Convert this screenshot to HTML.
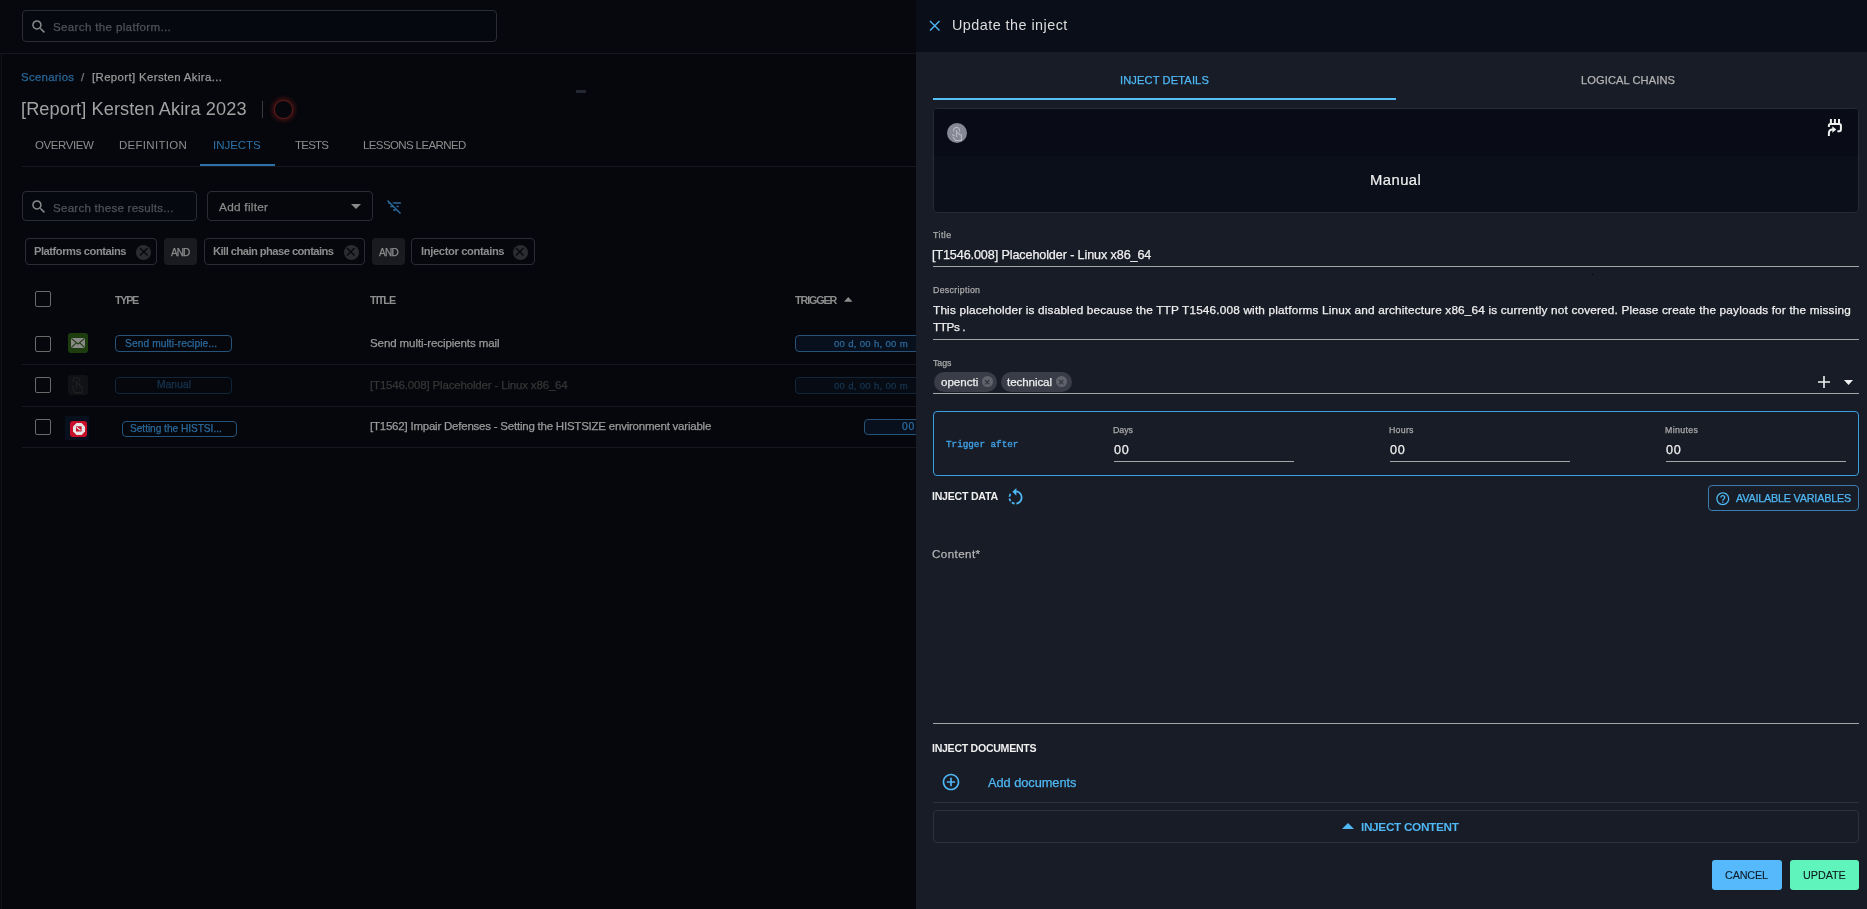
<!DOCTYPE html>
<html><head><meta charset="utf-8">
<style>
*{box-sizing:border-box;margin:0;padding:0}
html,body{width:1867px;height:909px;overflow:hidden;background:#05070c;font-family:"Liberation Sans",sans-serif}
.a{position:absolute}
.t{position:absolute;white-space:nowrap;line-height:1;will-change:transform}
svg{position:absolute;overflow:visible}
</style></head><body>
<div class="a" style="left:0px;top:0px;width:916px;height:53px;background:#06080d"></div>
<div class="a" style="left:0px;top:53px;width:916px;height:1px;background:#14171d"></div>
<div class="a" style="left:1px;top:54px;width:1px;height:855px;background:#101318"></div>
<div class="a" style="left:22px;top:10px;width:475px;height:32px;border:1px solid #2a2d33;border-radius:4px;background:#05080f"></div>
<svg style="left:29.5px;top:17.5px" width="17.5" height="17.5" viewBox="0 0 24 24"><path fill="#8a8a8a" d="M15.5 14h-.79l-.28-.27A6.471 6.471 0 0 0 16 9.5 6.5 6.5 0 1 0 9.5 16c1.61 0 3.09-.59 4.23-1.57l.27.28v.79l5 4.99L20.49 19l-4.99-5zm-6 0C7.01 14 5 11.99 5 9.5S7.01 5 9.5 5 14 7.01 14 9.5 11.99 14 9.5 14z"/></svg>
<div class="t" style="left:53.28px;top:21.28px;font-size:11.6px;color:#505258;font-family:'Liberation Sans',sans-serif;font-weight:normal;letter-spacing:0.330px;-webkit-text-stroke:0.25px #505258">Search the platform...</div>
<div class="t" style="left:21.39px;top:71.55px;font-size:11.4px;color:#2a6899;font-family:'Liberation Sans',sans-serif;font-weight:normal;letter-spacing:0.292px;-webkit-text-stroke:0.25px #2a6899">Scenarios</div>
<div class="t" style="left:81.00px;top:71.55px;font-size:11.4px;color:#7a7a7a;font-family:'Liberation Sans',sans-serif;font-weight:normal;-webkit-text-stroke:0.25px #7a7a7a">/</div>
<div class="t" style="left:92.00px;top:71.55px;font-size:11.4px;color:#9a9a9a;font-family:'Liberation Sans',sans-serif;font-weight:normal;letter-spacing:0.376px;-webkit-text-stroke:0.25px #9a9a9a">[Report] Kersten Akira...</div>
<div class="t" style="left:21.23px;top:99.59px;font-size:18.2px;color:#a2a2a2;font-family:'Liberation Sans',sans-serif;font-weight:normal;letter-spacing:0.081px">[Report] Kersten Akira 2023</div>
<div class="a" style="left:262px;top:101px;width:1px;height:17px;background:#3a3a3a"></div>
<div class="a" style="left:274.3px;top:100.2px;width:18.6px;height:18.6px;border-radius:50%;border:1.2px solid #5e1d1a;box-shadow:0 0 5px 1.5px rgba(105,26,24,0.75);background:#05070c"></div>
<div class="a" style="left:576px;top:90px;width:10px;height:3px;background:#232834"></div>
<div class="t" style="left:34.88px;top:139.67px;font-size:11.5px;color:#8d8d8d;font-family:'Liberation Sans',sans-serif;font-weight:normal;letter-spacing:-0.434px">OVERVIEW</div>
<div class="t" style="left:119.48px;top:139.67px;font-size:11.5px;color:#8d8d8d;font-family:'Liberation Sans',sans-serif;font-weight:normal;letter-spacing:0.288px">DEFINITION</div>
<div class="t" style="left:213.06px;top:139.67px;font-size:11.5px;color:#2c72a8;font-family:'Liberation Sans',sans-serif;font-weight:normal;letter-spacing:-0.024px">INJECTS</div>
<div class="t" style="left:295.47px;top:139.67px;font-size:11.5px;color:#8d8d8d;font-family:'Liberation Sans',sans-serif;font-weight:normal;letter-spacing:-0.771px">TESTS</div>
<div class="t" style="left:362.78px;top:139.67px;font-size:11.5px;color:#8d8d8d;font-family:'Liberation Sans',sans-serif;font-weight:normal;letter-spacing:-0.614px">LESSONS LEARNED</div>
<div class="a" style="left:200px;top:164px;width:75px;height:2px;background:#2c72a8"></div>
<div class="a" style="left:22px;top:166px;width:894px;height:1px;background:#15181e"></div>
<div class="a" style="left:22px;top:191px;width:175px;height:30px;border:1px solid #2a2d33;border-radius:4px;background:#05080f"></div>
<svg style="left:29.5px;top:197.5px" width="17.5" height="17.5" viewBox="0 0 24 24"><path fill="#8a8a8a" d="M15.5 14h-.79l-.28-.27A6.471 6.471 0 0 0 16 9.5 6.5 6.5 0 1 0 9.5 16c1.61 0 3.09-.59 4.23-1.57l.27.28v.79l5 4.99L20.49 19l-4.99-5zm-6 0C7.01 14 5 11.99 5 9.5S7.01 5 9.5 5 14 7.01 14 9.5 11.99 14 9.5 14z"/></svg>
<div class="t" style="left:53.08px;top:201.68px;font-size:11.6px;color:#505258;font-family:'Liberation Sans',sans-serif;font-weight:normal;letter-spacing:0.232px;-webkit-text-stroke:0.25px #505258">Search these results...</div>
<div class="a" style="left:207px;top:191px;width:166px;height:30px;border:1px solid #2a2d33;border-radius:4px"></div>
<div class="t" style="left:218.90px;top:202.21px;font-size:11.8px;color:#8a8a8a;font-family:'Liberation Sans',sans-serif;font-weight:normal;letter-spacing:0.270px;-webkit-text-stroke:0.25px #8a8a8a">Add filter</div>
<svg style="left:351px;top:204px" width="10" height="5" viewBox="0 0 10 5"><path fill="#8a8a8a" d="M0 0h10L5 5z"/></svg>
<svg style="left:386px;top:198px" width="17" height="17" viewBox="0 0 24 24"><path fill="#2c6a9c" d="M10.83 8H21V6H8.83l2 2zm5 5H18v-2h-4.17l2 2zM14 16.83V18h-4v-2h3.17l-3-3H6v-2h2.17l-3-3H3V6h.17L1.39 4.22 2.8 2.81l18.38 18.38-1.41 1.41L14 16.83z"/></svg>
<div class="a" style="left:25px;top:238px;width:132px;height:27px;border:1px solid #2a2d33;border-radius:4px"></div>
<div class="t" style="left:34.47px;top:246.02px;font-size:11.2px;color:#8d8d8d;font-family:'Liberation Sans',sans-serif;font-weight:bold;letter-spacing:-0.484px">Platforms contains</div>
<div class="a" style="left:135.9px;top:244.7px;width:15px;height:15px;border-radius:50%;background:#2a2c31"></div>
<svg style="left:139.65px;top:248.45px" width="7.5" height="7.5" viewBox="0 0 7.5 7.5"><path stroke="#07080b" stroke-width="1.5" d="M0 0L7.5 7.5M7.5 0L0 7.5"/></svg>
<div class="a" style="left:164px;top:238px;width:33px;height:27px;border-radius:4px;background:#191b20"></div>
<div class="t" style="left:171.20px;top:247.63px;font-size:10px;color:#8d8d8d;font-family:'Liberation Sans',sans-serif;font-weight:normal;letter-spacing:-0.925px;-webkit-text-stroke:0.25px #8d8d8d">AND</div>
<div class="a" style="left:204px;top:238px;width:161px;height:27px;border:1px solid #2a2d33;border-radius:4px"></div>
<div class="t" style="left:213.07px;top:246.02px;font-size:11.2px;color:#8d8d8d;font-family:'Liberation Sans',sans-serif;font-weight:bold;letter-spacing:-0.551px">Kill chain phase contains</div>
<div class="a" style="left:343.7px;top:244.7px;width:15px;height:15px;border-radius:50%;background:#2a2c31"></div>
<svg style="left:347.45px;top:248.45px" width="7.5" height="7.5" viewBox="0 0 7.5 7.5"><path stroke="#07080b" stroke-width="1.5" d="M0 0L7.5 7.5M7.5 0L0 7.5"/></svg>
<div class="a" style="left:372px;top:238px;width:33px;height:27px;border-radius:4px;background:#191b20"></div>
<div class="t" style="left:378.60px;top:247.63px;font-size:10px;color:#8d8d8d;font-family:'Liberation Sans',sans-serif;font-weight:normal;letter-spacing:-0.725px;-webkit-text-stroke:0.25px #8d8d8d">AND</div>
<div class="a" style="left:411px;top:238px;width:124px;height:27px;border:1px solid #2a2d33;border-radius:4px"></div>
<div class="t" style="left:420.67px;top:246.02px;font-size:11.2px;color:#8d8d8d;font-family:'Liberation Sans',sans-serif;font-weight:bold;letter-spacing:-0.370px">Injector contains</div>
<div class="a" style="left:512.6px;top:244.7px;width:15px;height:15px;border-radius:50%;background:#2a2c31"></div>
<svg style="left:516.35px;top:248.45px" width="7.5" height="7.5" viewBox="0 0 7.5 7.5"><path stroke="#07080b" stroke-width="1.5" d="M0 0L7.5 7.5M7.5 0L0 7.5"/></svg>
<div class="a" style="left:35px;top:291px;width:15.5px;height:15.5px;border:1.8px solid #6a6a6a;border-radius:2px"></div>
<div class="t" style="left:115.29px;top:294.76px;font-size:10.8px;color:#8d8d8d;font-family:'Liberation Sans',sans-serif;font-weight:bold;letter-spacing:-1.334px">TYPE</div>
<div class="t" style="left:370.39px;top:294.76px;font-size:10.8px;color:#8d8d8d;font-family:'Liberation Sans',sans-serif;font-weight:bold;letter-spacing:-0.946px">TITLE</div>
<div class="t" style="left:795.29px;top:294.96px;font-size:10.8px;color:#8d8d8d;font-family:'Liberation Sans',sans-serif;font-weight:bold;letter-spacing:-1.128px">TRIGGER</div>
<svg style="left:844px;top:296.5px" width="8.5" height="4.7" viewBox="0 0 9 5"><path fill="#8d8d8d" d="M0 5h9L4.5 0z"/></svg>
<div class="a" style="left:22px;top:364px;width:894px;height:1px;background:#15181e"></div>
<div class="a" style="left:22px;top:406px;width:894px;height:1px;background:#15181e"></div>
<div class="a" style="left:22px;top:447px;width:894px;height:1px;background:#15181e"></div>
<div class="a" style="left:35px;top:336px;width:15.5px;height:15.5px;border:1.8px solid #6a6a6a;border-radius:2px"></div>
<div class="a" style="left:68px;top:333px;width:20px;height:20px;border-radius:3px;background:#1d3d0e"></div>
<svg style="left:71px;top:338px" width="14" height="10" viewBox="0 0 14 10"><rect width="14" height="10" fill="#8a8a8a"/><path fill="none" stroke="#1d3d0e" stroke-width="1.1" d="M0.3 0.3L7 6L13.7 0.3M0.3 9.7L5 5.2M13.7 9.7L9 5.2"/></svg>
<div class="a" style="left:115px;top:335px;width:117px;height:17px;border:1px solid #265379;border-radius:4px"></div>
<div class="t" style="left:124.64px;top:338.67px;font-size:10.2px;color:#2b6a9c;font-family:'Liberation Sans',sans-serif;font-weight:normal;letter-spacing:0.103px;-webkit-text-stroke:0.25px #2b6a9c">Send multi-recipie...</div>
<div class="t" style="left:369.88px;top:337.67px;font-size:11.5px;color:#9a9a9a;font-family:'Liberation Sans',sans-serif;font-weight:normal;letter-spacing:-0.086px;-webkit-text-stroke:0.25px #9a9a9a">Send multi-recipients mail</div>
<div class="a" style="left:795px;top:335px;width:125px;height:17px;border:1px solid #265379;border-radius:4px;background:#07101c"></div>
<div class="t" style="left:833.72px;top:339.27px;font-size:9.6px;color:#2b6a9c;font-family:'Liberation Sans',sans-serif;font-weight:normal;letter-spacing:0.287px;-webkit-text-stroke:0.25px #2b6a9c">00 d, 00 h, 00 m</div>
<div class="a" style="left:35px;top:377px;width:15.5px;height:15.5px;border:1.8px solid #6a6a6a;border-radius:2px"></div>
<div class="a" style="left:68px;top:375px;width:20px;height:20px;border-radius:3px;background:#101215"></div>
<svg style="left:61.7px;top:369.2px" width="29.9" height="29.9" viewBox="0 0 26 26"><path fill="none" stroke="#1f2023" stroke-width="1.1" d="M9.8 11.5a3 3 0 1 1 5.6 0M12.6 10v7M12.6 12.5l2.5 .8v1.2l2.3 .5v5.5h-6l-2.4-3.5M8.3 14.5l2.3 1.5"/></svg>
<div class="a" style="left:115px;top:377px;width:117px;height:17px;border:1px solid #11263a;border-radius:4px"></div>
<div class="t" style="left:156.58px;top:379.87px;font-size:10.2px;color:#173650;font-family:'Liberation Sans',sans-serif;font-weight:normal;letter-spacing:0.105px;-webkit-text-stroke:0.25px #173650">Manual</div>
<div class="t" style="left:370.09px;top:379.87px;font-size:11.5px;color:#363636;font-family:'Liberation Sans',sans-serif;font-weight:normal;letter-spacing:-0.168px;-webkit-text-stroke:0.25px #363636">[T1546.008] Placeholder - Linux x86_64</div>
<div class="a" style="left:795px;top:377px;width:125px;height:17px;border:1px solid #11263a;border-radius:4px;background:#060b14"></div>
<div class="t" style="left:833.72px;top:381.27px;font-size:9.6px;color:#173650;font-family:'Liberation Sans',sans-serif;font-weight:normal;letter-spacing:0.287px;-webkit-text-stroke:0.25px #173650">00 d, 00 h, 00 m</div>
<div class="a" style="left:35px;top:419px;width:15.5px;height:15.5px;border:1.8px solid #6a6a6a;border-radius:2px"></div>
<div class="a" style="left:65px;top:416px;width:24px;height:24px;background:#07101c"></div>
<div class="a" style="left:70px;top:421px;width:17px;height:16px;border-radius:3px;background:#c8102a"></div>
<svg style="left:72.5px;top:422.5px" width="12" height="12" viewBox="0 0 12 12"><path fill="#e6e6e6" d="M3.5 0h5L12 3.5v5L8.5 12h-5L0 8.5v-5z"/><rect x="3" y="3.3" width="5.6" height="5.2" fill="#c8102a"/><path stroke="#e6e6e6" stroke-width="1.2" d="M3.6 4.2L7.5 7.3"/></svg>
<div class="a" style="left:122px;top:421px;width:115px;height:16px;border:1px solid #265379;border-radius:4px"></div>
<div class="t" style="left:130.34px;top:423.97px;font-size:10.2px;color:#2b6a9c;font-family:'Liberation Sans',sans-serif;font-weight:normal;letter-spacing:-0.055px;-webkit-text-stroke:0.25px #2b6a9c">Setting the HISTSI...</div>
<div class="t" style="left:370.19px;top:421.47px;font-size:11.5px;color:#9a9a9a;font-family:'Liberation Sans',sans-serif;font-weight:normal;letter-spacing:-0.223px;-webkit-text-stroke:0.25px #9a9a9a">[T1562] Impair Defenses - Setting the HISTSIZE environment variable</div>
<div class="a" style="left:864px;top:419px;width:60px;height:16px;border:1px solid #265379;border-radius:4px;background:#07101c"></div>
<div class="t" style="left:902.38px;top:422.10px;font-size:10.4px;color:#2b6a9c;font-family:'Liberation Sans',sans-serif;font-weight:normal;letter-spacing:0.836px;-webkit-text-stroke:0.25px #2b6a9c">00</div>
<div class="a" style="left:916px;top:0px;width:951px;height:52px;background:#0a0e18"></div>
<div class="a" style="left:916px;top:52px;width:951px;height:857px;background:#181c27"></div>
<svg style="left:929.5px;top:20.5px" width="9.5" height="9.5" viewBox="0 0 10 10"><path stroke="#4fb8f5" stroke-width="1.4" d="M0 0L10 10M10 0L0 10"/></svg>
<div class="t" style="left:952.32px;top:18.01px;font-size:14.4px;color:#dcdcdc;font-family:'Liberation Sans',sans-serif;font-weight:normal;letter-spacing:0.459px">Update the inject</div>
<div class="t" style="left:1119.70px;top:75.00px;font-size:11.1px;color:#4fb8f5;font-family:'Liberation Sans',sans-serif;font-weight:normal;letter-spacing:0.128px;-webkit-text-stroke:0.25px #4fb8f5">INJECT DETAILS</div>
<div class="t" style="left:1580.61px;top:75.00px;font-size:11.1px;color:#b4b4b4;font-family:'Liberation Sans',sans-serif;font-weight:normal;letter-spacing:0.093px;-webkit-text-stroke:0.25px #b4b4b4">LOGICAL CHAINS</div>
<div class="a" style="left:933px;top:98px;width:463px;height:2px;background:#56c0f8"></div>
<div class="a" style="left:933px;top:108px;width:926px;height:105px;border:1px solid #262a35;border-radius:4px;background:#0b0f1a;overflow:hidden"><div class="a" style="left:0;top:0;width:924px;height:47px;background:#090c16"></div></div>
<div class="a" style="left:947px;top:122.8px;width:20px;height:20px;border-radius:50%;background:#868896"></div>
<svg style="left:944px;top:120px" width="26" height="26" viewBox="0 0 26 26"><path fill="none" stroke="#b9bbc4" stroke-width="1.1" d="M9.8 11.5a3 3 0 1 1 5.6 0M12.6 10v7M12.6 12.5l2.5 .8v1.2l2.3 .5v5.5h-6l-2.4-3.5M8.3 14.5l2.3 1.5"/></svg>
<svg style="left:1822px;top:114px" width="26" height="26" viewBox="0 0 26 26"><g fill="none" stroke="#f0f0f0" stroke-width="2"><path d="M8.9 5V10M12.9 5V10M17 5V10M6.9 13V11.5Q6.9 10 8.5 10H17.4Q18.9 10 18.9 11.5V15.6Q18.9 17.3 17.2 17.3H15.4M6.9 22V19.2Q6.9 15.4 10.6 15.4H11.5"/></g><path fill="#f0f0f0" d="M10.3 12.2L14.3 15.4L10.3 18.8z"/></svg>
<div class="t" style="left:1370.42px;top:172.57px;font-size:14.8px;color:#f0f0f0;font-family:'Liberation Sans',sans-serif;font-weight:normal;letter-spacing:0.460px;-webkit-text-stroke:0.2px #f0f0f0">Manual</div>
<div class="t" style="left:933.02px;top:230.75px;font-size:8.8px;color:#a9a9a9;font-family:'Liberation Sans',sans-serif;font-weight:normal;letter-spacing:0.448px;-webkit-text-stroke:0.25px #a9a9a9">Title</div>
<div class="t" style="left:932.02px;top:249.33px;font-size:12.6px;color:#f0f0f0;font-family:'Liberation Sans',sans-serif;font-weight:normal;letter-spacing:-0.108px;-webkit-text-stroke:0.25px #f0f0f0">[T1546.008] Placeholder - Linux x86_64</div>
<div class="a" style="left:933px;top:266px;width:926px;height:1px;background:#a6a6a6"></div>
<div class="a" style="left:1592px;top:274px;width:1px;height:1px;background:#000"></div>
<div class="t" style="left:932.50px;top:286.15px;font-size:8.8px;color:#a9a9a9;font-family:'Liberation Sans',sans-serif;font-weight:normal;letter-spacing:0.298px;-webkit-text-stroke:0.25px #a9a9a9">Description</div>
<div class="t" style="left:932.76px;top:304.71px;font-size:11.8px;color:#f0f0f0;font-family:'Liberation Sans',sans-serif;font-weight:normal;letter-spacing:0.171px;-webkit-text-stroke:0.25px #f0f0f0">This placeholder is disabled because the TTP T1546.008 with platforms Linux and architecture x86_64 is currently not covered. Please create the payloads for the missing</div>
<div class="t" style="left:932.76px;top:321.61px;font-size:11.8px;color:#f0f0f0;font-family:'Liberation Sans',sans-serif;font-weight:normal;letter-spacing:-0.419px;-webkit-text-stroke:0.25px #f0f0f0">TTPs .</div>
<div class="a" style="left:933px;top:339px;width:926px;height:1px;background:#a6a6a6"></div>
<div class="t" style="left:933.02px;top:359.35px;font-size:8.8px;color:#a9a9a9;font-family:'Liberation Sans',sans-serif;font-weight:normal;letter-spacing:-0.061px;-webkit-text-stroke:0.25px #a9a9a9">Tags</div>
<div class="a" style="left:934px;top:372px;width:63px;height:20px;border-radius:10px;background:#3a3d47"></div>
<div class="t" style="left:940.64px;top:375.58px;font-size:11.6px;color:#f0f0f0;font-family:'Liberation Sans',sans-serif;font-weight:normal;letter-spacing:-0.015px;-webkit-text-stroke:0.25px #f0f0f0">opencti</div>
<div class="a" style="left:982.0px;top:376.2px;width:11px;height:11px;border-radius:50%;background:#60636c"></div>
<svg style="left:985.3px;top:379.5px" width="4.4" height="4.4" viewBox="0 0 4.4 4.4"><path stroke="#33353d" stroke-width="1.1" d="M0 0L4.4 4.4M4.4 0L0 4.4"/></svg>
<div class="a" style="left:1001px;top:372px;width:71px;height:20px;border-radius:10px;background:#3a3d47"></div>
<div class="t" style="left:1007.13px;top:375.58px;font-size:11.6px;color:#f0f0f0;font-family:'Liberation Sans',sans-serif;font-weight:normal;letter-spacing:-0.092px;-webkit-text-stroke:0.25px #f0f0f0">technical</div>
<div class="a" style="left:1056.0px;top:376.2px;width:11px;height:11px;border-radius:50%;background:#60636c"></div>
<svg style="left:1059.3px;top:379.5px" width="4.4" height="4.4" viewBox="0 0 4.4 4.4"><path stroke="#33353d" stroke-width="1.1" d="M0 0L4.4 4.4M4.4 0L0 4.4"/></svg>
<svg style="left:1818px;top:376px" width="12" height="12" viewBox="0 0 12 12"><path stroke="#f0f0f0" stroke-width="1.6" d="M6 0v12M0 6h12"/></svg>
<svg style="left:1844px;top:380px" width="9" height="5" viewBox="0 0 9 5"><path fill="#f0f0f0" d="M0 0h9L4.5 5z"/></svg>
<div class="a" style="left:933px;top:393px;width:926px;height:1px;background:#a6a6a6"></div>
<div class="a" style="left:933px;top:411px;width:926px;height:65px;border:1.5px solid #3a9ee2;border-radius:4px"></div>
<div class="t" style="left:946.07px;top:440.28px;font-size:9.3px;color:#409fe2;font-family:'Liberation Mono',monospace;font-weight:normal;letter-spacing:-0.015px;-webkit-text-stroke:0.35px #409fe2">Trigger after</div>
<div class="t" style="left:1113.30px;top:425.95px;font-size:8.8px;color:#a9a9a9;font-family:'Liberation Sans',sans-serif;font-weight:normal;letter-spacing:-0.017px;-webkit-text-stroke:0.25px #a9a9a9">Days</div>
<div class="t" style="left:1113.50px;top:443.83px;font-size:12.6px;color:#f0f0f0;font-family:'Liberation Sans',sans-serif;font-weight:normal;letter-spacing:0.859px;-webkit-text-stroke:0.25px #f0f0f0">00</div>
<div class="a" style="left:1114px;top:461px;width:180px;height:1px;background:#a6a6a6"></div>
<div class="t" style="left:1389.30px;top:425.95px;font-size:8.8px;color:#a9a9a9;font-family:'Liberation Sans',sans-serif;font-weight:normal;letter-spacing:0.254px;-webkit-text-stroke:0.25px #a9a9a9">Hours</div>
<div class="t" style="left:1389.50px;top:443.83px;font-size:12.6px;color:#f0f0f0;font-family:'Liberation Sans',sans-serif;font-weight:normal;letter-spacing:0.859px;-webkit-text-stroke:0.25px #f0f0f0">00</div>
<div class="a" style="left:1390px;top:461px;width:180px;height:1px;background:#a6a6a6"></div>
<div class="t" style="left:1665.30px;top:425.95px;font-size:8.8px;color:#a9a9a9;font-family:'Liberation Sans',sans-serif;font-weight:normal;letter-spacing:0.369px;-webkit-text-stroke:0.25px #a9a9a9">Minutes</div>
<div class="t" style="left:1665.50px;top:443.83px;font-size:12.6px;color:#f0f0f0;font-family:'Liberation Sans',sans-serif;font-weight:normal;letter-spacing:0.859px;-webkit-text-stroke:0.25px #f0f0f0">00</div>
<div class="a" style="left:1666px;top:461px;width:180px;height:1px;background:#a6a6a6"></div>
<div class="t" style="left:932.21px;top:491.43px;font-size:10.6px;color:#f0f0f0;font-family:'Liberation Sans',sans-serif;font-weight:bold;letter-spacing:-0.242px">INJECT DATA</div>
<svg style="left:1005.4px;top:486.8px" width="21" height="21" viewBox="0 0 24 24"><path fill="#4fb8f5" d="M7.11 8.53 5.7 7.11C4.8 8.27 4.24 9.61 4.07 11h2.02c.14-.87.49-1.72 1.02-2.47zM6.09 13H4.07c.17 1.39.72 2.73 1.62 3.89l1.41-1.42c-.52-.75-.87-1.59-1.01-2.47zm1.01 5.32c1.16.9 2.51 1.44 3.9 1.61V17.9c-.87-.15-1.71-.49-2.46-1.03L7.1 18.32zM13 4.07V1L8.45 5.55 13 10V6.09c2.84.48 5 2.94 5 5.91s-2.16 5.43-5 5.91v2.02c3.95-.49 7-3.85 7-7.93s-3.05-7.44-7-7.93z"/></svg>
<div class="a" style="left:1708px;top:485px;width:151px;height:26px;border:1px solid #3a7db0;border-radius:4px"></div>
<svg style="left:1714.7px;top:490.7px" width="15.6" height="15.6" viewBox="0 0 24 24"><path fill="#4fb8f5" d="M11 18h2v-2h-2v2zm1-16C6.48 2 2 6.48 2 12s4.48 10 10 10 10-4.48 10-10S17.52 2 12 2zm0 18c-4.41 0-8-3.59-8-8s3.59-8 8-8 8 3.59 8 8-3.59 8-8 8zm0-14c-2.21 0-4 1.79-4 4h2c0-1.1.9-2 2-2s2 .9 2 2c0 2-3 1.75-3 5h2c0-2.25 3-2.5 3-5 0-2.21-1.79-4-4-4z"/></svg>
<div class="t" style="left:1736.00px;top:493.26px;font-size:10.8px;color:#4fb8f5;font-family:'Liberation Sans',sans-serif;font-weight:normal;letter-spacing:-0.204px;-webkit-text-stroke:0.25px #4fb8f5">AVAILABLE VARIABLES</div>
<div class="t" style="left:932.42px;top:548.28px;font-size:11.6px;color:#b5b5b5;font-family:'Liberation Sans',sans-serif;font-weight:normal;letter-spacing:0.425px;-webkit-text-stroke:0.25px #b5b5b5">Content*</div>
<div class="a" style="left:933px;top:723px;width:926px;height:1px;background:#a6a6a6"></div>
<div class="t" style="left:932.01px;top:743.43px;font-size:10.6px;color:#f0f0f0;font-family:'Liberation Sans',sans-serif;font-weight:bold;letter-spacing:-0.290px">INJECT DOCUMENTS</div>
<svg style="left:941px;top:772px" width="20" height="20" viewBox="0 0 24 24"><path fill="#4fb8f5" d="M13 7h-2v4H7v2h4v4h2v-4h4v-2h-4V7zm-1-5C6.49 2 2 6.49 2 12s4.49 10 10 10 10-4.49 10-10S17.51 2 12 2zm0 18c-4.41 0-8-3.59-8-8s3.59-8 8-8 8 3.59 8 8-3.59 8-8 8z"/></svg>
<div class="t" style="left:988.00px;top:776.56px;font-size:12.8px;color:#4fb8f5;font-family:'Liberation Sans',sans-serif;font-weight:normal;letter-spacing:-0.043px;-webkit-text-stroke:0.25px #4fb8f5">Add documents</div>
<div class="a" style="left:933px;top:802px;width:926px;height:1px;background:#2d313b"></div>
<div class="a" style="left:933px;top:810px;width:926px;height:33px;border:1px solid #2d313b;border-radius:4px"></div>
<svg style="left:1341.6px;top:822.8px" width="12" height="6.2" viewBox="0 0 12 6"><path fill="#4fb8f5" d="M0 6h12L6 0z"/></svg>
<div class="t" style="left:1361.23px;top:821.51px;font-size:11.8px;color:#4fb8f5;font-family:'Liberation Sans',sans-serif;font-weight:bold;letter-spacing:-0.336px">INJECT CONTENT</div>
<div class="a" style="left:1712px;top:860px;width:70px;height:30px;border-radius:3px;background:#56b9fb"></div>
<div class="t" style="left:1725.26px;top:870.06px;font-size:10.8px;color:#0e1b28;font-family:'Liberation Sans',sans-serif;font-weight:normal;letter-spacing:-0.146px;-webkit-text-stroke:0.1px #0e1b28">CANCEL</div>
<div class="a" style="left:1790px;top:860px;width:69px;height:30px;border-radius:3px;background:#5ef4bc"></div>
<div class="t" style="left:1802.69px;top:870.06px;font-size:10.8px;color:#0e1b1c;font-family:'Liberation Sans',sans-serif;font-weight:normal;letter-spacing:-0.048px;-webkit-text-stroke:0.1px #0e1b1c">UPDATE</div>
</body></html>
